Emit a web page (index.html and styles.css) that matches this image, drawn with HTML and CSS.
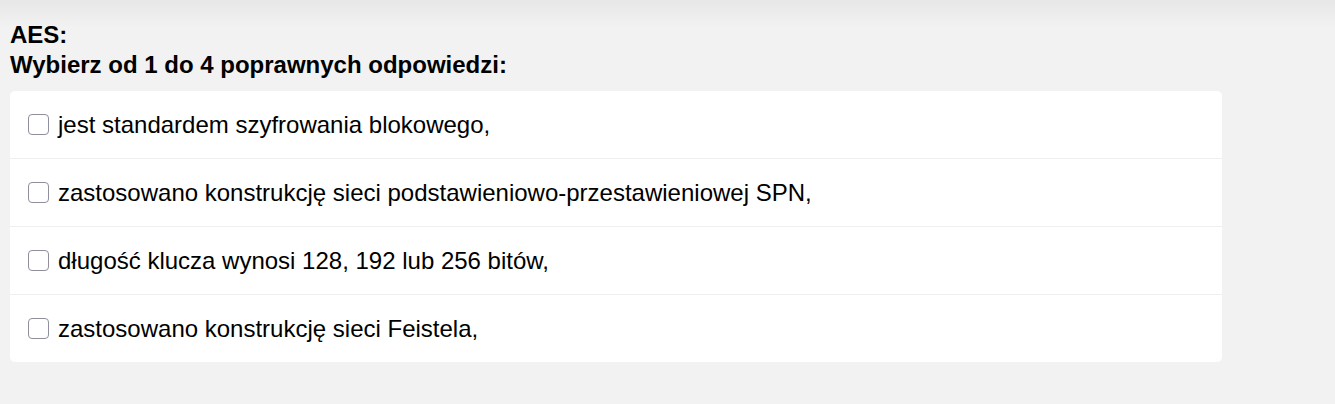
FILE: index.html
```html
<!DOCTYPE html>
<html lang="pl">
<head>
<meta charset="utf-8">
<title>AES</title>
<link rel="stylesheet" href="styles.css">
</head>
<body>
<div class="page">
  <div class="question">
    <div class="title">AES:</div>
    <div class="title">Wybierz od 1 do 4 poprawnych odpowiedzi:</div>
  </div>
  <div class="card">
    <label class="row"><input type="checkbox" class="box"><span>jest standardem szyfrowania blokowego,</span></label>
    <label class="row"><input type="checkbox" class="box"><span>zastosowano konstrukcję sieci podstawieniowo-przestawieniowej SPN,</span></label>
    <label class="row"><input type="checkbox" class="box"><span>długość klucza wynosi 128, 192 lub 256 bitów,</span></label>
    <label class="row"><input type="checkbox" class="box"><span>zastosowano konstrukcję sieci Feistela,</span></label>
  </div>
</div>
</body>
</html>
```

FILE: styles.css
```css
html, body {
  margin: 0;
  padding: 0;
}
body {
  background: linear-gradient(to bottom, #e7e7e7 0px, #f2f2f2 28px) #f2f2f2;
  background-repeat: no-repeat;
  min-height: 404px;
  font-family: "Liberation Sans", Arial, sans-serif;
  color: #000;
}
.page {
  padding: 20px 10px 0 10px;
  width: 1212px;
}
.question {
  margin-bottom: 11px;
}
.title {
  font-size: 24px;
  font-weight: bold;
  line-height: 30px;
}
.card {
  background: #fff;
  border-radius: 5px;
  display: flex;
  flex-direction: column;
}
.row {
  display: flex;
  align-items: center;
  gap: 9px;
  height: 67px;
  padding: 0 18px;
  font-size: 24px;
  border-top: 1px solid #efefef;
}
.row:first-child {
  border-top: none;
}
.box {
  appearance: none;
  -webkit-appearance: none;
  box-sizing: border-box;
  width: 21px;
  height: 21px;
  margin: 0;
  flex: none;
  border: 1px solid #8f8f9d;
  border-radius: 4px;
  background: #fff;
}
```
